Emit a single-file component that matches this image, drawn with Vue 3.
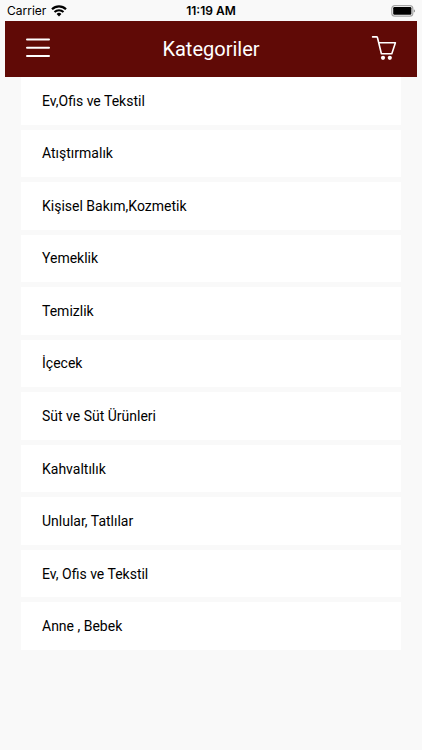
<script setup>
import { ref } from 'vue'

// Category names in the order they are listed
const categories = ref([
  'Ev,Ofis ve Tekstil',
  'Atıştırmalık',
  'Kişisel Bakım,Kozmetik',
  'Yemeklik',
  'Temizlik',
  'İçecek',
  'Süt ve Süt Ürünleri',
  'Kahvaltılık',
  'Unlular, Tatlılar',
  'Ev, Ofis ve Tekstil',
  'Anne , Bebek'
])
</script>

<template>
  <div class="page">
    <!-- Phone status bar -->
    <div class="status-bar">
      <div class="carrier">
        <span>Carrier</span>
        <svg width="16" height="12" viewBox="0 0 16 12">
          <path d="M1 4.2 A10 10 0 0 1 15 4.2" fill="none" stroke="#000" stroke-width="2.2" />
          <path d="M3.5 7 A6.4 6.4 0 0 1 12.5 7" fill="none" stroke="#000" stroke-width="2" />
          <path d="M8 11.4 L5.6 9 A3.4 3.4 0 0 1 10.4 9 Z" fill="#000" />
        </svg>
      </div>
      <span class="time">11:19 AM</span>
      <svg class="battery" width="25" height="12" viewBox="0 0 25 12">
        <rect x="1.8" y="0.6" width="21" height="10.6" rx="3" fill="#fff" stroke="#a5a5a5" stroke-width="1.2" />
        <rect x="3.2" y="2" width="18.2" height="7.8" rx="1.2" fill="#000" />
        <path d="M23.8 4.2 Q25 4.8 25 5.9 Q25 7 23.8 7.6 Z" fill="#8c8c8c" />
      </svg>
    </div>

    <header class="header">
      <button type="button" aria-label="Menü">
        <svg width="26" height="26" viewBox="0 0 26 26" stroke="#fff" stroke-width="2" stroke-linecap="round">
          <path d="M2 3.4 H24 M2 11.8 H24 M2 20.1 H24" />
        </svg>
      </button>
      <h1>Kategoriler</h1>
      <button type="button" aria-label="Sepet">
        <svg width="26" height="26" viewBox="0 0 26 26">
          <path d="M1.6 0.9 H5.6 Q6.2 0.9 6.5 1.8 L10.4 17.7 H20.8 L24.4 6.8 H8" fill="none" stroke="#fff" stroke-width="1.6" stroke-linejoin="round" stroke-linecap="round" />
          <circle cx="12" cy="21.8" r="2.1" fill="#fff" />
          <circle cx="18.8" cy="21.8" r="2.1" fill="#fff" />
        </svg>
      </button>
    </header>

    <ul class="categories">
      <li v-for="category in categories" :key="category">
        <a href="#">{{ category }}</a>
      </li>
    </ul>
  </div>
</template>

<style>
body {
  background: #f9f9f9;
}
</style>

<style scoped>
.page {
  min-height: 100vh;
  box-sizing: border-box;
  padding: 0 5px;
  font-family: Roboto, "Noto Sans", sans-serif;
  color: #000;
}

.status-bar {
  display: grid;
  grid-template-columns: 1fr auto 1fr;
  align-items: center;
  height: 21px;
  padding: 0 2px;
  font-family: Inter, "Liberation Sans", sans-serif;
  font-size: 12px;
  line-height: 21px;
}

.carrier {
  display: flex;
  align-items: center;
  gap: 5px;
}

.time {
  font-weight: 600;
}

.battery {
  justify-self: end;
}

.header {
  display: flex;
  align-items: center;
  justify-content: space-between;
  height: 56px;
  padding: 0 20px;
  background: #600a06;
}

.header h1 {
  margin: 0;
  font-size: 20px;
  font-weight: 400;
  color: #fff;
}

.header button {
  display: flex;
  padding: 0;
  border: none;
  background: none;
  cursor: pointer;
}

/* Rows share the list height equally */
.categories {
  display: grid;
  grid-auto-rows: 1fr;
  gap: 5px;
  min-height: 573px;
  margin: 0 16px;
  padding: 0;
  list-style: none;
}

.categories a {
  display: flex;
  align-items: center;
  height: 100%;
  padding: 0 21px;
  background: #fff;
  font-size: 14px;
  color: #000;
  text-decoration: none;
}
</style>
